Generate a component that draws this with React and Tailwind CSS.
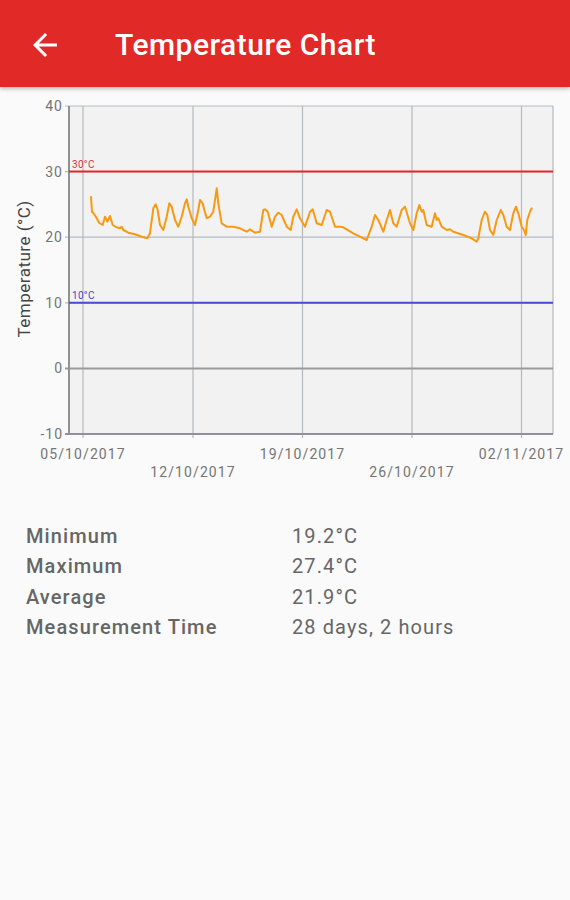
const pts = [
  [91, 197], [92, 211.7], [93.3, 213], [96, 217], [99.3, 223], [102.7, 225], [105, 216.7], [107.3, 221.7],
  [110, 216], [112.7, 225], [116.7, 227.3], [120, 228.3], [121.7, 226.7], [123.3, 230], [128.3, 232.7],
  [135, 234.3], [141.7, 236.7], [147.3, 238.3], [150, 233.3], [153.3, 208.3], [155.7, 204.3], [157.7, 210],
  [160, 225], [163.3, 230], [166.7, 216.7], [169.3, 203.3], [171.7, 206.7], [175, 220], [178.3, 226.7],
  [181.7, 216.7], [185, 203.3], [186.7, 199.3], [188.3, 206.7], [191.7, 218.3], [195, 225], [198.3, 210],
  [200, 200], [202.7, 203.3], [204.3, 210], [206.7, 218.3], [210, 216.7], [213.3, 211.7], [216.7, 188.3],
  [218.3, 203.3], [221.7, 223.3], [226.7, 226.7], [233.3, 226.7], [240, 228.3], [246.7, 231.7], [250, 229.3],
  [255, 232.7], [260, 231.7], [263.3, 210], [265, 209.3], [267.7, 211.7], [271.7, 226.7], [275, 216.7],
  [278.3, 212.7], [281.7, 215], [286.7, 226.7], [290.7, 230], [293.3, 216.7], [296.7, 209.3], [300, 218.3],
  [305, 226.7], [310, 211.7], [312.7, 209.3], [316.7, 223.3], [321.7, 225], [326.7, 210], [330, 211.7],
  [335, 226.7], [340, 226.7], [343.3, 227.3], [353.3, 233.3], [360, 236.7], [366.7, 240], [371.7, 226.7],
  [375, 215], [378.3, 220], [383.3, 231.7], [386.7, 220], [390, 210], [393.3, 223.3], [396.7, 226.7],
  [401.7, 210], [405, 206.7], [410, 223.3], [413.3, 230], [416.7, 213.3], [419.3, 205], [421.7, 211.7],
  [423.3, 210], [426.7, 225], [431.7, 226.7], [435, 213.3], [436.7, 220], [438.3, 218.3], [441.7, 226.7],
  [446.7, 230], [450, 229.3], [453.3, 231.7], [463.3, 235], [471.7, 238.3], [476.7, 241.7], [478.3, 238.3],
  [481.7, 220], [485, 211.7], [487.3, 215], [490, 230], [493.3, 235], [496.7, 220], [500.7, 210],
  [503.3, 215], [506.7, 226.7], [510, 230], [513.3, 213.3], [516, 206.7], [518.3, 213.3], [521.7, 226.7],
  [524, 230], [525.7, 235], [527.3, 220], [530, 211.7], [531.7, 208.3],
]

const yTicks = [
  { v: '40', y: 106 },
  { v: '30', y: 171.6 },
  { v: '20', y: 237.2 },
  { v: '10', y: 302.8 },
  { v: '0', y: 368.4 },
  { v: '-10', y: 434 },
]

const xTicks = [
  { label: '05/10/2017', x: 83, row: 0 },
  { label: '12/10/2017', x: 193, row: 1 },
  { label: '19/10/2017', x: 302.5, row: 0 },
  { label: '26/10/2017', x: 412, row: 1 },
  { label: '02/11/2017', x: 521.5, row: 0 },
]

const stats = [
  ['Minimum', '19.2°C'],
  ['Maximum', '27.4°C'],
  ['Average', '21.9°C'],
  ['Measurement Time', '28 days, 2 hours'],
]

const font = 'Roboto, sans-serif'

const Chart = () => {
  const left = 69
  const right = 553
  const top = 106
  const bottom = 434

  return (
    <svg width="570" height="420" viewBox="0 87 570 420" className="block">
      <rect x={left} y={top} width={right - left} height={bottom - top} fill="#f2f2f2" />

      {/* vertical grid */}
      {xTicks.map((t) => (
        <line key={t.label} x1={t.x} y1={top} x2={t.x} y2={bottom + 4} stroke="#b5babf" strokeWidth="1.2" />
      ))}
      <line x1={right} y1={top} x2={right} y2={bottom} stroke="#b5babf" strokeWidth="1.2" />

      {/* horizontal grid */}
      {yTicks.map((t) => (
        <line
          key={t.v}
          x1={left - 4}
          y1={t.y}
          x2={right}
          y2={t.y}
          stroke={t.v === '0' ? '#9a9a9a' : '#b5babf'}
          strokeWidth={t.v === '0' ? 2 : 1.2}
        />
      ))}

      {/* axes */}
      <line x1={left} y1={top} x2={left} y2={bottom} stroke="#8f9396" strokeWidth="2" />
      <line x1={left - 4} y1={bottom} x2={right} y2={bottom} stroke="#8f9396" strokeWidth="2" />

      {/* limit lines */}
      <line x1={left} y1={171.6} x2={right} y2={171.6} stroke="#e0282c" strokeWidth="2" />
      <text x="72" y="167.5" fontSize="10" letterSpacing="0.3" fill="#d8333a" fontFamily={font}>30°C</text>
      <line x1={left} y1={302.8} x2={right} y2={302.8} stroke="#4a4ad2" strokeWidth="2" />
      <text x="72" y="298.5" fontSize="10" letterSpacing="0.3" fill="#4545cc" fontFamily={font}>10°C</text>

      {/* data */}
      <polyline
        points={pts.map((p) => p.join(',')).join(' ')}
        fill="none"
        stroke="#f79a12"
        strokeWidth="2"
        strokeLinejoin="round"
        strokeLinecap="round"
      />

      {/* y labels */}
      {yTicks.map((t) => (
        <text
          key={t.v}
          x="63"
          y={t.y + 5}
          textAnchor="end"
          fontSize="14"
          letterSpacing="1"
          fill="#757575"
          fontFamily={font}
        >
          {t.v}
        </text>
      ))}

      {/* x labels */}
      {xTicks.map((t) => (
        <text
          key={t.label}
          x={t.x}
          y={t.row === 0 ? 459 : 477}
          textAnchor="middle"
          fontSize="14"
          letterSpacing="1.1"
          fill="#757575"
          fontFamily={font}
        >
          {t.label}
        </text>
      ))}

      <text
        x="0"
        y="0"
        transform="translate(30 269) rotate(-90)"
        textAnchor="middle"
        fontSize="17"
        letterSpacing="0.5"
        fill="#444"
        fontFamily={font}
      >
        Temperature (°C)
      </text>
    </svg>
  )
}

const App = () => {
  return (
    <div className="min-h-[900px] w-[570px] bg-[#fafafa] font-['Roboto',sans-serif]">
      <header className="relative z-10 flex h-[87px] items-center bg-[#e12a27] pt-[2px] shadow-[0_2px_4px_rgba(0,0,0,0.25)]">
        <div className="flex w-[90px] justify-center">
          <svg width="36" height="36" viewBox="0 0 24 24" fill="#fff">
            <path d="M20 11H7.83l5.59-5.59L12 4l-8 8 8 8 1.41-1.41L7.83 13H20v-2z" />
          </svg>
        </div>
        <h1 className="ml-[25px] text-[30px] font-medium tracking-[0.5px] text-white">Temperature Chart</h1>
      </header>

      <Chart />

      <div className="grid grid-cols-[266px_1fr] pl-[26px] pt-[14px] text-[20px] leading-[30.4px] tracking-[1.1px] text-[#666]">
        {stats.map(([label, value]) => (
          <div key={label} className="contents">
            <div className="font-medium">{label}</div>
            <div>{value}</div>
          </div>
        ))}
      </div>
    </div>
  )
}

export default App
